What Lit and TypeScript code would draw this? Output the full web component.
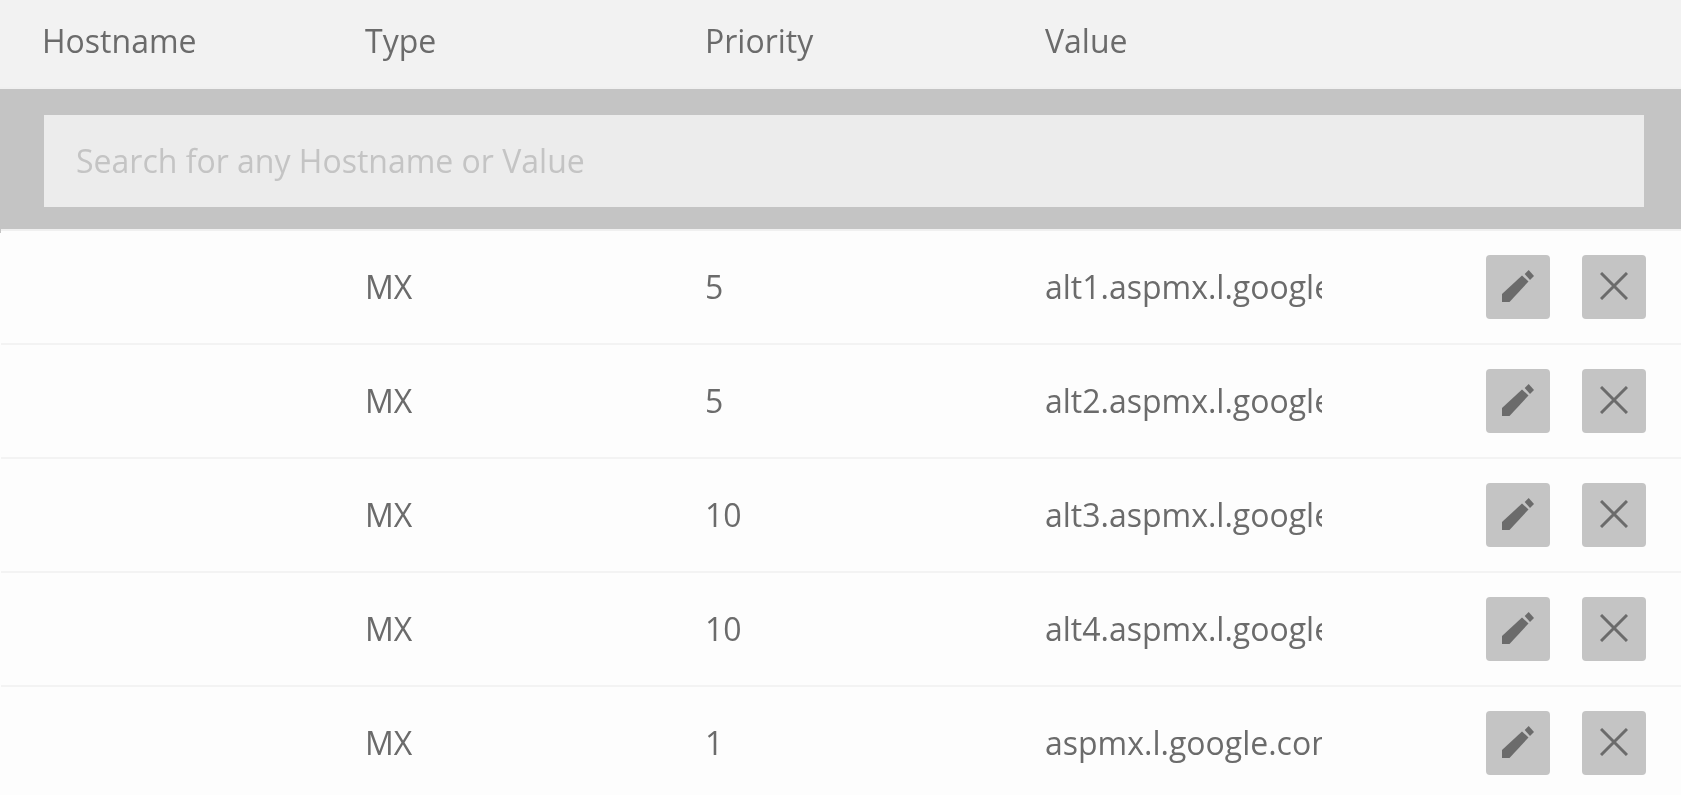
import { html, css, LitElement } from 'lit';
import { customElement, state } from 'lit/decorators.js';

const records = [
  { type: 'MX', priority: 5, value: 'alt1.aspmx.l.google.com' },
  { type: 'MX', priority: 5, value: 'alt2.aspmx.l.google.com' },
  { type: 'MX', priority: 10, value: 'alt3.aspmx.l.google.com' },
  { type: 'MX', priority: 10, value: 'alt4.aspmx.l.google.com' },
  { type: 'MX', priority: 1, value: 'aspmx.l.google.com' },
];

@customElement('app-root')
export class AppRoot extends LitElement {
  static styles = css`
    :host {
      display: block;
      height: 795px;
      overflow: hidden;
      background: #fdfdfd;
      font-family: 'Open Sans', sans-serif;
      font-size: 32px;
      color: #6b6b6b;
    }
    .cols {
      display: grid;
      grid-template-columns: 323px 340px 340px 277px 1fr;
      padding-left: 42px;
      align-items: center;
    }
    .cell {
      will-change: transform;
    }
    .head {
      height: 87px;
      background: #f2f2f2;
      border-bottom: 2px solid #f0f0f0;
    }
    .head .cell {
      padding-bottom: 6px;
    }
    .search {
      position: relative;
      background: #c4c4c4;
      padding: 26px 37px 22px 44px;
      border-bottom: 2px solid #f0f0f0;
    }
    /* small notch where the list starts 1px in */
    .search::after {
      content: '';
      position: absolute;
      left: 0;
      top: 100%;
      width: 1px;
      height: 4px;
      background: #c4c4c4;
    }
    .search input {
      display: block;
      box-sizing: border-box;
      width: 100%;
      height: 92px;
      padding: 0 32px 2px;
      border: 0;
      outline: 0;
      background: #ececec;
      font: inherit;
      color: #6b6b6b;
      will-change: transform;
    }
    .search input::placeholder {
      color: #c4c4c4;
      opacity: 1;
    }
    .row {
      height: 112px;
      border-bottom: 2px solid #f3f3f3;
      margin-left: 1px;
      padding-left: 41px;
    }
    .row .cell {
      padding-bottom: 2px;
    }
    .row:last-child {
      border-bottom: 0;
    }
    .value {
      overflow: hidden;
      white-space: nowrap;
    }
    .actions {
      display: flex;
      gap: 32px;
      padding-left: 164px;
    }
    button {
      display: flex;
      align-items: center;
      justify-content: center;
      width: 64px;
      height: 64px;
      padding: 0 0 2px;
      border: 0;
      border-radius: 4px;
      background: #c4c4c4;
    }
    svg {
      display: block;
    }
  `;

  @state()
  search = '';

  render() {
    return html`
      <div class="cols head">
        <div class="cell">Hostname</div>
        <div class="cell">Type</div>
        <div class="cell">Priority</div>
        <div class="cell">Value</div>
      </div>
      <div class="search">
        <input
          type="text"
          placeholder="Search for any Hostname or Value"
          .value=${this.search}
          @input=${(e: any) => (this.search = e.target.value)}
        />
      </div>
      ${records.map(
        (r) => html`
          <div class="cols row">
            <div></div>
            <div class="cell">${r.type}</div>
            <div class="cell">${r.priority}</div>
            <div class="cell value">${r.value}</div>
            <div class="actions">
              <button aria-label="Edit">
                <svg width="32" height="32" viewBox="0 0 32 32" fill="#6b6b6b">
                  <path d="M0 32V24L20 5.500L26.500 11.500L7.500 32Z" />
                  <path d="M22.700 4L26.700 0L32 6L28 10Z" />
                </svg>
              </button>
              <button aria-label="Delete">
                <svg width="28" height="28" viewBox="0 0 28 28" stroke="#6b6b6b" stroke-width="3" fill="none">
                  <path d="M1 1L27 27M27 1L1 27" />
                </svg>
              </button>
            </div>
          </div>
        `
      )}
    `;
  }
}
